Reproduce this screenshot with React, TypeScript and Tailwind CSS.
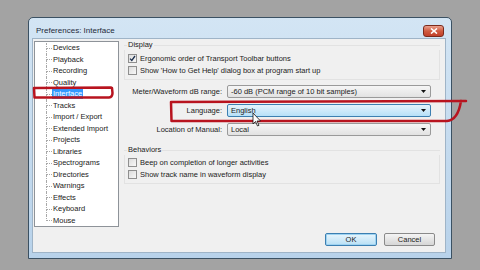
import React from "react";

const treeItems = [
  "Devices",
  "Playback",
  "Recording",
  "Quality",
  "Interface",
  "Tracks",
  "Import / Export",
  "Extended Import",
  "Projects",
  "Libraries",
  "Spectrograms",
  "Directories",
  "Warnings",
  "Effects",
  "Keyboard",
  "Mouse",
];

function CheckBox({ checked = false, label }: { checked?: boolean; label: string }) {
  return (
    <div className="flex h-[9px] items-center gap-[3px]">
      <div className="flex h-[9px] w-[9px] shrink-0 items-center justify-center border border-[#8f8f8f] bg-gradient-to-br from-[#dcdcdc] to-[#f8f8f8]">
        {checked && (
          <svg width="7" height="7" viewBox="0 0 7 7">
            <path d="M1 3.6 L2.8 5.4 L6 1" fill="none" stroke="#1c2f4e" strokeWidth="1.3" />
          </svg>
        )}
      </div>
      <span className="whitespace-nowrap leading-none">{label}</span>
    </div>
  );
}

function GroupHeader({ title }: { title: string }) {
  return (
    <div className="flex h-[10px] items-center">
      <div className="h-px w-[3px] bg-[#e2e2e2]" />
      <span className="px-[1px] leading-none">{title}</span>
      <div className="h-px flex-1 bg-[#e2e2e2]" />
    </div>
  );
}

function Combo({ label, value, hover = false }: { label: string; value: string; hover?: boolean }) {
  return (
    <div className="flex h-[13px] items-center">
      <div className="w-[99px] whitespace-nowrap pr-[1px] text-right leading-none">{label}</div>
      <div
        className={`ml-[4px] flex h-[13px] w-[204px] items-center justify-between rounded-[2px] border pl-[3px] pr-[4px] ${
          hover
            ? "border-[#3c7fb1] bg-gradient-to-b from-[#e4f3fc] to-[#b6e0f8]"
            : "border-[#9a9a9a] bg-gradient-to-b from-[#f6f6f6] to-[#e2e2e2]"
        }`}
      >
        <span className="whitespace-nowrap leading-none">{value}</span>
        <svg width="5" height="3" viewBox="0 0 5 3">
          <path d="M0 0 L5 0 L2.5 3 Z" fill="#111" />
        </svg>
      </div>
    </div>
  );
}

function Tree() {
  return (
    <div className="ml-[1px] mt-[2px] h-[186px] w-[85px] shrink-0 border border-[#8e9399] bg-white pt-[0.5px]">
      {treeItems.map((item, i) => {
        const last = i === treeItems.length - 1;
        const selected = item === "Interface";
        return (
          <div key={item} className="flex h-[11.5px] items-stretch">
            <div className="ml-[11px] flex w-[6px] flex-col">
              <div className="flex-1 border-b border-l border-dotted border-[#a8a8a8]" />
              <div className={`flex-1 ${last ? "" : "border-l border-dotted border-[#a8a8a8]"}`} />
            </div>
            <div className="flex items-center">
              <span
                className={`whitespace-nowrap px-[1px] leading-[10px] ${
                  selected ? "bg-[#3399ff] text-white" : "text-[#1a1a1a]"
                }`}
              >
                {item}
              </span>
            </div>
          </div>
        );
      })}
    </div>
  );
}

export default function App() {
  return (
    <div
      className="relative h-[270px] w-[480px] overflow-hidden bg-[#a3a3a3] pl-[28px] pt-[17px] text-[7.5px] text-[#1b1b1b]"
      style={{ fontFamily: '"Liberation Sans", Arial, sans-serif' }}
    >
      <div className="flex h-[242px] w-[424px] flex-col rounded-t-[5px] border border-[#3b5163] bg-gradient-to-b from-[#d3e5f4] to-[#b8d2ea]">
        {/* title bar */}
        <div className="flex h-[20px] items-start justify-between pl-[7px] pr-[7px]">
          <span className="pt-[8px] text-[8px] leading-[10px] text-[#1e2a3a]">Preferences: Interface</span>
          <div className="mt-[7px] flex h-[12px] w-[21px] items-center justify-center rounded-[3px] border border-[#7b2a1c] bg-gradient-to-b from-[#e9a08e] via-[#d05b40] to-[#c1402a]">
            <svg width="8" height="6" viewBox="0 0 8 6">
              <path d="M1 0.5 L7 5.5 M7 0.5 L1 5.5" stroke="white" strokeWidth="1.6" />
            </svg>
          </div>
        </div>

        {/* client area */}
        <div className="ml-[3px] mr-[5px] mb-[5px] flex flex-1 flex-col border border-[#9fb4c7] bg-[#f0f0f0]">
          <div className="flex">
            <Tree />
            <div className="ml-[5px] mt-[1px] flex w-[316px] flex-col">
              <GroupHeader title="Display" />
              <div className="flex h-[30px] flex-col gap-[3px] border-x border-b border-[#e2e2e2] pl-[3px] pt-[4px]">
                <CheckBox checked label="Ergonomic order of Transport Toolbar buttons" />
                <CheckBox label="Show 'How to Get Help' dialog box at program start up" />
              </div>
              <div className="mt-[5px] flex flex-col gap-[6px]">
                <Combo label="Meter/Waveform dB range:" value="-60 dB (PCM range of 10 bit samples)" />
                <Combo label="Language:" value="English" hover />
                <Combo label="Location of Manual:" value="Local" />
              </div>
              <div className="mt-[9px]">
                <GroupHeader title="Behaviors" />
              </div>
              <div className="flex h-[29px] flex-col gap-[3px] border-x border-b border-[#e2e2e2] pl-[3px] pt-[3px]">
                <CheckBox label="Beep on completion of longer activities" />
                <CheckBox label="Show track name in waveform display" />
              </div>
            </div>
          </div>

          {/* buttons */}
          <div className="mt-[6px] flex justify-end gap-[7px] pr-[10px]">
            <button className="flex h-[13px] w-[52px] items-center justify-center rounded-[2px] border border-[#3c7fb1] bg-gradient-to-b from-[#e8f5fc] to-[#b9e0f5] text-[7.5px] leading-none shadow-[inset_0_0_0_1px_#9fd3f1]">
              OK
            </button>
            <button className="flex h-[13px] w-[51px] items-center justify-center rounded-[2px] border border-[#8a8a8a] bg-gradient-to-b from-[#f4f4f4] to-[#d6d6d6] text-[7.5px] leading-none">
              Cancel
            </button>
          </div>
        </div>
      </div>

      {/* hand-drawn annotations and cursor on top of the screenshot */}
      <svg className="pointer-events-none absolute left-0 top-0" width="480" height="270" viewBox="0 0 480 270">
        <path
          d="M111 87.5 L34 88 L34.5 97.5 L109 97.5 Q112.5 97 112.5 93 L112 88"
          fill="none"
          stroke="#b8141f"
          strokeWidth="2.5"
          strokeLinecap="round"
          strokeLinejoin="round"
        />
        <path
          d="M466 101 L171 102 L171.5 121 L447 121 Q458 120 461 101"
          fill="none"
          stroke="#b8141f"
          strokeWidth="2.5"
          strokeLinecap="round"
          strokeLinejoin="round"
        />
        <path
          d="M253 113 L253 124 L255.5 121.5 L257.5 126 L259 125.3 L257 121 L260.5 121 Z"
          fill="white"
          stroke="#111"
          strokeWidth="0.8"
        />
      </svg>
    </div>
  );
}
